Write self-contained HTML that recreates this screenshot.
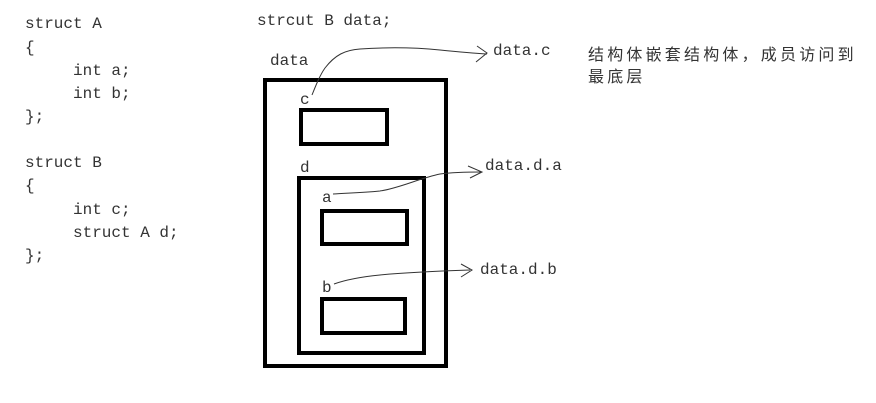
<!DOCTYPE html>
<html><head><meta charset="utf-8"><style>
html,body{margin:0;padding:0;background:#fff;width:876px;height:403px;overflow:hidden}
svg text{font-family:"Liberation Mono","Noto Serif CJK SC",monospace;font-size:16px;fill:#333}
svg text.cn{font-family:"Liberation Sans","Noto Sans CJK SC",sans-serif;font-size:16px;letter-spacing:3.2px}
</style></head><body>
<svg width="876" height="403" xmlns="http://www.w3.org/2000/svg">
<g>
<text x="25" y="28">struct A</text>
<text x="25" y="52">{</text>
<text x="73" y="75">int a;</text>
<text x="73" y="98">int b;</text>
<text x="25" y="121">};</text>
<text x="25" y="167">struct B</text>
<text x="25" y="190">{</text>
<text x="73" y="214">int c;</text>
<text x="73" y="237">struct A d;</text>
<text x="25" y="260">};</text>
<text x="257" y="25">strcut B data;</text>
<text x="270" y="65">data</text>
<text x="300" y="104">c</text>
<text x="300" y="172">d</text>
<text x="322" y="202">a</text>
<text x="322" y="292">b</text>
<text x="493" y="55">data.c</text>
<text x="485" y="170">data.d.a</text>
<text x="480" y="274">data.d.b</text>
<text class="cn" x="588" y="60">结构体嵌套结构体，成员访问到</text>
<text class="cn" x="588" y="82">最底层</text>
</g>
<g fill="none" stroke="#000" stroke-width="4">
<rect x="265" y="80" width="181" height="286"/>
<rect x="301" y="110" width="86" height="34"/>
<rect x="299" y="178" width="125" height="175"/>
<rect x="322" y="211" width="85" height="33"/>
<rect x="322" y="299" width="83" height="34"/>
</g>
<g fill="none" stroke="#333" stroke-width="1">
<path d="M312,95 C316,85 320,75 325,68 C335,55 345,50 360,49 C390,47 420,48 440,50 C460,52 470,53 487,54"/>
<path d="M477,46 L487,53 L476,62"/>
<path d="M333,194 C345,193 360,193 380,191 C400,188 420,178 440,174 C455,172 470,172 482,172"/>
<path d="M468,166 L482,172 L470,178"/>
<path d="M334,284 C345,280 360,277 380,275 C410,272 440,271 470,270"/>
<path d="M461,264 L472,270 L461,277"/>
</g>
</svg>
</body></html>
